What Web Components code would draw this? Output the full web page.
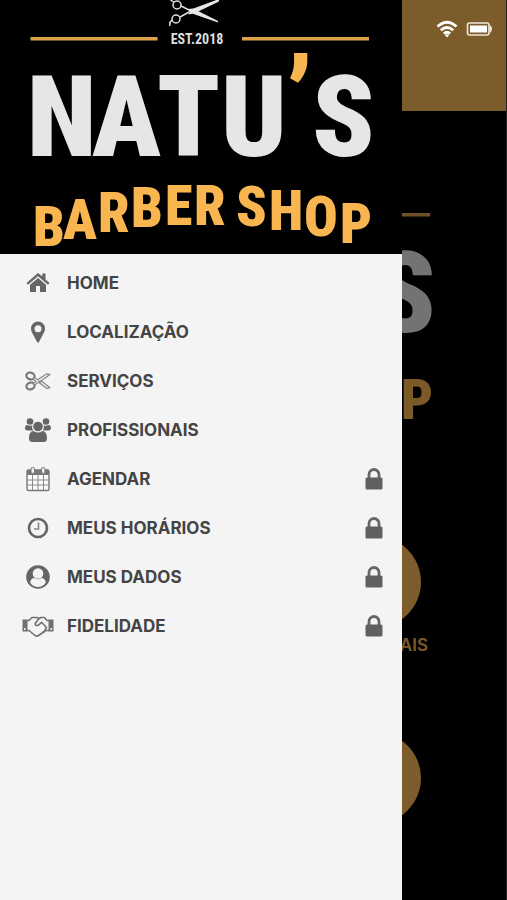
<!DOCTYPE html>
<html lang="pt-BR">
<head>
<meta charset="utf-8">
<meta name="viewport" content="width=device-width, initial-scale=1">
<title>Natu’s Barber Shop</title>
<style>
html, body { margin: 0; height: 100%; background: #000; }
body { font-family: Inter, "Liberation Sans", sans-serif; }
</style>
</head>
<body>
<barber-app></barber-app>
<script>
const ICONS = {
  home: '<path fill="#666" d="M16 6 4.500 16l1.500 1.800L16 9.300l10 8.500 1.500-1.800-4-3.600V6.500h-3.200v3z"/><path fill="#666" d="M16 11 8 17.800V25h6v-6h4v6h6v-7.200z"/>',
  pin: '<path fill="#666" fill-rule="evenodd" d="M16 5.500a7 7 0 0 0-7 7c0 2 .6 3.200 1.300 4.500L15 26q1 1.200 2 0l4.700-9c.7-1.300 1.300-2.500 1.300-4.500a7 7 0 0 0-7-7zm0 3.700a3.500 3.500 0 1 1 0 7 3.500 3.500 0 0 1 0-7z"/>',
  scissors: '<g fill="none" stroke="#777" stroke-width="2.200"><ellipse cx="8.500" cy="11" rx="4.200" ry="3.300" transform="rotate(20 8.500 11)"/><ellipse cx="8.500" cy="21" rx="4.200" ry="3.300" transform="rotate(-20 8.500 21)"/></g><g fill="#f4f4f4" stroke="#888" stroke-width="1.200" stroke-linejoin="round"><path d="m12 12.500 3.500 2.300 9.500-6 3 .8-10 7-6 3.600-.8-1.600 3-2-3-2z"/><path d="m17 17.500 8 6 3-.8-8-6.200z"/></g><circle cx="17" cy="16" r=".8" fill="#777"/>',
  users: '<g fill="#666"><circle cx="8" cy="7.500" r="3.300"/><circle cx="24" cy="7.500" r="3.300"/><path d="M3 14.500q0-3.500 2.300-3.500 3 1.500 5 .2-.8 3 .8 5.300H5.500Q3 16.500 3 14.500zM29 14.500q0-3.500-2.300-3.500-3 1.500-5 .2.8 3-.8 5.300h5.600q2.400 0 2.400-2z"/><circle cx="16" cy="12.500" r="4.800"/><path d="M11.500 17q4.500 3 9 0c3.500 0 4.500 4 4.500 7.500Q25 28 21.500 28h-11Q7 28 7 24.500c0-3.500 1-7.500 4.500-7.500z"/></g>',
  calendar: '<rect x="5" y="7" width="22" height="20.500" rx="1.500" fill="#fafafa" stroke="#777" stroke-width="1.400"/><path fill="#777" d="M5 7h22v5H5z"/><path stroke="#888" stroke-width="1" d="M10.500 12v15M16 12v15M21.500 12v15M5 17h22M5 22h22"/><rect x="9" y="4.500" width="3.500" height="6" rx="1.600" fill="#eee" stroke="#777"/><rect x="19.500" y="4.500" width="3.500" height="6" rx="1.600" fill="#eee" stroke="#777"/>',
  clock: '<circle cx="16" cy="16" r="9" fill="none" stroke="#666" stroke-width="2.700"/><path d="M16.500 10.500V17H12" fill="none" stroke="#888" stroke-width="1.600"/>',
  user: '<circle cx="16" cy="16" r="11.800" fill="#666"/><circle cx="16" cy="12.500" r="5.300" fill="#f4f4f4"/><path fill="#f4f4f4" d="M12.500 17q3.500 2.400 7 0c3.200.3 4 2.500 4.300 4.700Q20.500 26 16 26t-7.800-4.300c.3-2.200 1.100-4.400 4.300-4.700z"/>',
  handshake: '<g fill="none" stroke="#707070" stroke-width="1.600" stroke-linejoin="round" stroke-linecap="round"><path d="M5 10.500h2l3-3h5l2 1 2-1h3.500l2.500 3h2M5 20.500h2l6 5q2 1 3.500 0l7.500-5h3M23 20l1.500-2.500-5-5.200-3.300 3q-3 .7-3-1.800L17 8.500M16.500 25.500l3-2M20 23l1.500-1.500"/></g><path fill="#707070" fill-rule="evenodd" d="M.5 9.500H5.500v12H.5zM26.500 9.500h5v12h-5zM2 18v2h1.500v-2zM28.500 18v2H30v-2z"/>',
  lock: '<path fill="none" stroke="#666" stroke-width="2.800" d="M11 15v-3.500a5 5 0 0 1 10 0V15"/><rect x="7.500" y="14.500" width="17" height="12" rx="1.500" fill="#606060"/>',
  wifi: '<g fill="none" stroke="#fff" stroke-width="2.800"><path d="M6.500 13.500q9.500-8.500 19 0M9.800 17.200q6.200-5.500 12.400 0M12.900 20.600q3.100-2.700 6.200 0"/></g><path fill="#fff" d="m13.800 22 2.200 2.400 2.200-2.400q-2.200-1.500-4.400 0z"/>',
  battery: '<rect x="4.500" y="10" width="21.500" height="12" rx="2" fill="none" stroke="#efe6d8" stroke-width="1.600"/><path fill="#fff" d="M7 12.500h17v7H7z"/><path fill="#efe6d8" d="M26.500 11.500q2.500 2 2.500 4.500t-2.500 4.500z"/>'
};

function define(name, html, setup) {
  const template = document.createElement('template');
  template.innerHTML = html;
  customElements.define(name, class extends HTMLElement {
    static get observedAttributes() { return ['name']; }
    constructor() {
      super();
      this.attachShadow({ mode: 'open' }).append(template.content.cloneNode(true));
    }
    connectedCallback() { this.render(); }
    attributeChangedCallback() { this.render(); }
    render() { if (setup) setup(this, this.shadowRoot); }
  });
}

define('ui-icon', `<style>
:host { display: block; flex: none; width: 32px; height: 32px; }
svg { display: block; width: 100%; height: 100%; }
</style><svg viewBox="0 0 32 32" aria-hidden="true"></svg>`,
(el, root) => { root.querySelector('svg').innerHTML = ICONS[el.getAttribute('name')] || ''; });

define('brand-logo', `<style>
:host { display: block; background: #000; }
svg { display: block; width: 100%; height: auto; }
text { font-family: "Roboto Condensed", Roboto, "Liberation Sans", sans-serif; font-weight: 700; }
.name { font-size: 114px; font-weight: 900; fill: #e6e6e6; }
.mark { fill: #f9b550; }
.shop { font-size: 56px; font-weight: 900; fill: #f9b550; }
.est { font-size: 14px; fill: #ddd; }
</style>
<svg viewBox="0 0 402 254" role="img" aria-label="Natu’s Barber Shop">
  <path fill="#dba24a" d="M30.500 37h127v3.500h-127zM242 37h127v3.500H242z"/>
  <g class="full">
    <g fill="none" stroke="#ddd" stroke-width="1.500">
      <circle cx="177" cy="5" r="4"/><circle cx="176" cy="19" r="4"/>
      <path d="M172 20q-3 2-2 6M174 2q-3-1-4-3M181 6l10 5M180 17l11-6"/>
    </g>
    <path fill="#e6e6e6" d="m188 9 5-.500 25 12.500v1.500L192 13.500zM188 14.500l4-5.500L219-1v2.500l-25 12z"/>
    <text class="est" x="197" y="44" text-anchor="middle">EST.2018</text>
    <text class="name" x="27 92 157 221 286 312" y="156 156 156 156 138 156">NATU<tspan class="mark">’</tspan>S</text>
    <text class="shop" x="33 63 98 131 165 194" y="246 239 232 227 225 225">BARBER</text>
    <text class="shop" x="236 269 304 340" y="226 230 236 243">SHOP</text>
  </g>
  <g class="edge">
    <text class="name" x="312" y="156">S</text>
    <text class="shop" x="340" y="243">P</text>
  </g>
</svg>`,
(el, root) => {
  const unused = root.querySelector(el.hasAttribute('peek') ? '.full' : '.edge');
  if (unused) unused.remove();
});

define('menu-item', `<style>
:host { display: block; }
a { display: flex; align-items: center; height: 49px; padding: 0 12px 0 22px; gap: 13px; color: #444; text-decoration: none; font-size: 17px; font-weight: 700; line-height: 20px; }
.label { flex: 1; }
</style><a href="#"><ui-icon></ui-icon><span class="label"><slot></slot></span></a>`,
(el, root) => {
  const link = root.querySelector('a');
  root.querySelector('ui-icon').setAttribute('name', el.getAttribute('icon'));
  if (el.hasAttribute('locked')) {
    const lock = document.createElement('ui-icon');
    lock.setAttribute('name', 'lock');
    link.append(lock);
  }
});

define('side-drawer', `<style>
:host { display: flex; flex-direction: column; background: #f4f4f4; }
nav { padding-top: 4px; }
</style><brand-logo></brand-logo><nav aria-label="Menu"><slot></slot></nav>`);

define('home-tile', `<style>
:host { display: flex; flex-direction: column; align-items: center; gap: 7px; height: 196px; color: #f9b550; font-size: 17px; font-weight: 600; line-height: 20px; }
.disc { width: 92px; height: 92px; border-radius: 50%; background: #f9b856; }
.label { align-self: flex-end; }
</style><div class="disc"></div><div class="label"><slot></slot></div>`);

define('home-screen', `<style>
:host { display: block; min-height: 100vh; background: #000; }
header { height: 111px; background: #f9b856; }
main { padding-top: 65px; }
brand-logo { width: 79.3%; margin-left: 12%; }
.tiles { display: grid; grid-template-columns: 106px 106px; justify-content: end; column-gap: 120px; padding: 106px 79px 0 0; }
</style><header></header><main><brand-logo peek></brand-logo><div class="tiles">
<home-tile></home-tile><home-tile>AIS</home-tile><home-tile></home-tile><home-tile></home-tile></div></main>`);

define('status-bar', `<style>
:host { display: flex; justify-content: flex-end; padding: 13px 12px 0 0; }
</style><ui-icon name="wifi"></ui-icon><ui-icon name="battery"></ui-icon>`);

define('barber-app', `<style>
:host { display: block; position: relative; height: 100vh; overflow: hidden; }
.shade { position: absolute; inset: 0; background: rgba(0,0,0,.5); border-right: 1px solid #222; }
status-bar { position: absolute; top: 0; right: 0; }
side-drawer { position: absolute; inset: 0 auto 0 0; width: 79.3%; }
</style>
<home-screen></home-screen>
<div class="shade"></div>
<status-bar></status-bar>
<side-drawer>
  <menu-item icon="home">HOME</menu-item>
  <menu-item icon="pin">LOCALIZAÇÃO</menu-item>
  <menu-item icon="scissors">SERVIÇOS</menu-item>
  <menu-item icon="users">PROFISSIONAIS</menu-item>
  <menu-item icon="calendar" locked>AGENDAR</menu-item>
  <menu-item icon="clock" locked>MEUS HORÁRIOS</menu-item>
  <menu-item icon="user" locked>MEUS DADOS</menu-item>
  <menu-item icon="handshake" locked>FIDELIDADE</menu-item>
</side-drawer>`);
</script>
</body>
</html>
